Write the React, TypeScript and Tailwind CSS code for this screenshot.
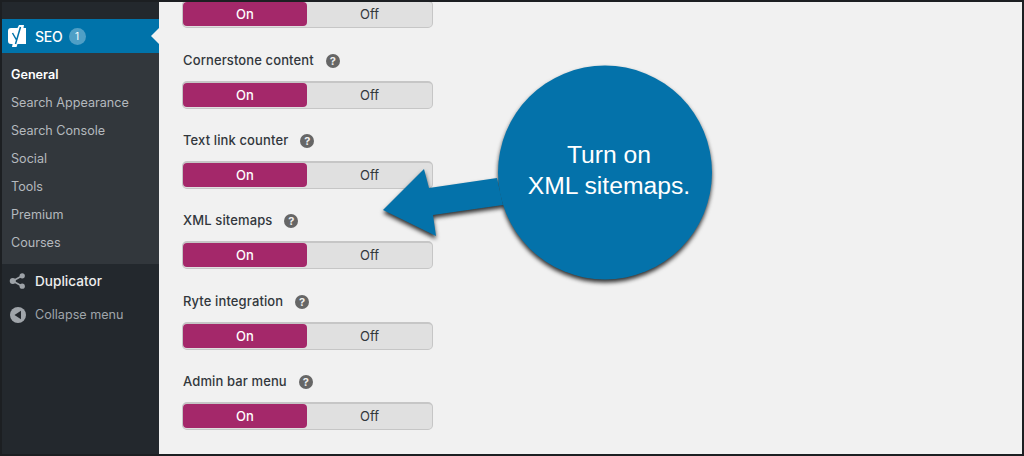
const menuItems = ["Search Appearance", "Search Console", "Social", "Tools", "Premium", "Courses"];

const settings = [
  { label: "Cornerstone content", after: "mb-[21px]" },
  { label: "Text link counter", after: "mb-[21px]" },
  { label: "XML sitemaps", after: "mb-[22px]" },
  { label: "Ryte integration", after: "mb-[21px]" },
  { label: "Admin bar menu", after: "mb-0" },
];

function Toggle() {
  return (
    <div className="flex h-[28px] w-[251px] rounded-[5px] border border-t-2 border-[#c6c6c6] bg-[#e0e0e0] pb-[1px] text-[13px]">
      <div className="flex w-[124px] items-center justify-center rounded-[4px] bg-[#a4286a] pt-[2px] font-medium text-white">On</div>
      <div className="flex flex-1 items-center justify-center pt-[2px] text-[#32373c]">Off</div>
    </div>
  );
}

function HelpIcon() {
  return (
    <span className="flex h-[14px] w-[14px] items-center justify-center rounded-full bg-[#666] text-[11px] font-bold leading-none text-[#eee]">?</span>
  );
}

export default function App() {
  return (
    <div className="relative h-[456px] w-[1024px] overflow-hidden border-2 border-[#1c1f22] bg-[#f1f1f1] font-['Inter','Liberation_Sans',sans-serif]">
      <div className="flex h-full">
        {/* sidebar */}
        <aside className="flex h-full w-[157px] shrink-0 flex-col bg-[#23282d]">
          <div className="h-[17px]" />
          <div className="relative flex h-[34px] items-center bg-[#0073aa] pl-[6px] text-white">
            <svg width="18" height="22" viewBox="0 0 18 22" className="mr-[9px]">
              <path d="M3 3h6.5L11 0h5l-.5 3H18v16H9.5L8.5 22H4l.6-3H3a3 3 0 0 1-3-3V6a3 3 0 0 1 3-3z" fill="#fff" />
              <path d="M4.5 8L8.5 15M12.5 2L7.5 19" fill="none" stroke="#0073aa" strokeWidth="1.5" />
            </svg>
            <span className="text-[14px] font-medium tracking-[-0.2px]">SEO</span>
            <span className="ml-[6px] flex h-[17px] w-[17px] items-center justify-center rounded-full bg-[#4f9fc6] text-[10px]">1</span>
            <span className="absolute right-0 top-[9px] h-0 w-0 border-y-[8px] border-r-[8px] border-y-transparent border-r-[#f1f1f1]" />
          </div>
          <nav className="flex h-[211px] flex-col bg-[#32373c] pl-[9px] pt-[8px] text-[12.6px] text-[#b4b9be]">
            <span className="flex h-[28px] items-center font-semibold text-white">General</span>
            {menuItems.map((item) => (
              <span key={item} className="flex h-[28px] items-center">{item}</span>
            ))}
          </nav>
          <div className="flex h-[34px] items-center pl-[7px] text-[13.6px] font-medium text-[#eee]">
            <svg width="17" height="18" viewBox="0 0 18 18" className="mr-[9px]" fill="#9ea3a8">
              <circle cx="4" cy="9" r="3.2" />
              <circle cx="14" cy="3.5" r="2.8" />
              <circle cx="14" cy="14.5" r="2.8" />
              <path d="M4 9L14 3.5M4 9l10 5.5" stroke="#9ea3a8" strokeWidth="1.8" />
            </svg>
            Duplicator
          </div>
          <div className="flex h-[34px] items-center pl-[7px] text-[12.6px] text-[#a0a5aa]">
            <svg width="16" height="16" viewBox="0 0 16 16" className="ml-[1px] mr-[9px]">
              <circle cx="8" cy="8" r="8" fill="#a0a5aa" />
              <path d="M11 3.8v8.4L4.5 8z" fill="#23282d" />
            </svg>
            Collapse menu
          </div>
        </aside>

        {/* settings list */}
        <main className="flex-1 pl-[23px] text-[#32373c]">
          <div className="-mt-[2px] mb-[22px]"><Toggle /></div>
          {settings.map((s) => (
            <section key={s.label} className={s.after}>
              <div className="mb-[11px] flex h-[20px] items-center gap-[12px] pl-[1px] pt-[2px] text-[13px] font-medium tracking-[0.12px]">
                {s.label}
                <HelpIcon />
              </div>
              <Toggle />
            </section>
          ))}
        </main>
      </div>

      {/* callout over the page */}
      <div className="absolute left-[379px] top-[45px] h-[245px] w-[340px]">
        <svg width="340" height="245" viewBox="381 47 340 245" className="absolute inset-0 drop-shadow-[0px_3px_2px_rgba(0,0,0,0.8)]">
          <path d="M383 210L424 169l5 19 68-10 6 27-70 10 3 21z" fill="#0472aa" />
          <circle cx="605" cy="172.5" r="107" fill="#0472aa" />
        </svg>
        <div className="absolute left-[118px] top-[92px] w-[220px] text-center font-['Liberation_Sans',sans-serif] text-[24.7px] leading-[31px] text-white">
          Turn on
          <br />
          XML sitemaps.
        </div>
      </div>
    </div>
  );
}
